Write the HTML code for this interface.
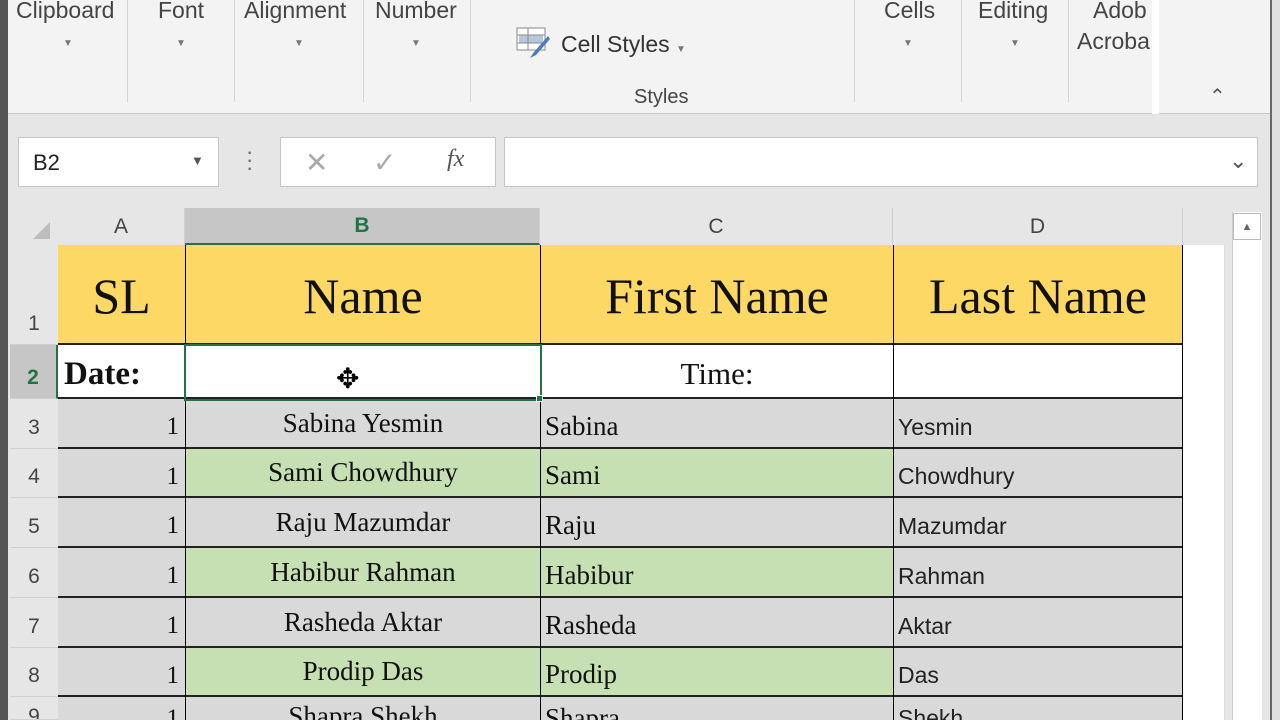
<!DOCTYPE html>
<html><head><meta charset="utf-8"><style>
*{margin:0;padding:0;box-sizing:border-box}
html{width:1280px;height:720px;overflow:hidden}
body{width:1280px;height:720px;overflow:hidden;background:#e6e6e6;position:relative;font-family:"Liberation Sans",sans-serif}
.a{position:absolute}
.rib{left:8px;top:0;width:1262px;height:114px;background:#f3f3f3;border-bottom:1px solid #c6c6c6}
.lbl{font-size:23px;color:#444;position:absolute;top:-3px}
.sep{position:absolute;top:0;width:1px;height:102px;background:#d4d4d4}
.dd{position:absolute;top:38px;font-size:10px;color:#777}
.box{background:#fff;border:1px solid #c6c6c6;position:absolute}
.cell{position:absolute;font-family:"Liberation Serif",serif;color:#111;display:flex;align-items:center;border-bottom:2px solid #222}
.hdr{position:absolute;top:208px;height:37px;font-size:21px;color:#444;display:flex;align-items:center;justify-content:center;border-right:1px solid #cfcfcf}
.rn{position:absolute;left:10px;width:48px;font-size:21px;color:#444;display:flex;align-items:flex-end;justify-content:center;padding-bottom:8px;background:#e6e6e6;border-bottom:1px solid #cfcfcf}
</style></head><body>
<div class="a" style="left:0;top:0;width:8px;height:720px;background:#555"></div>
<div class="a rib">
<div class="lbl" style="left:8px">Clipboard</div><div class="dd" style="left:55px">▼</div>
<div class="sep" style="left:119px"></div>
<div class="lbl" style="left:150px">Font</div><div class="dd" style="left:168px">▼</div>
<div class="sep" style="left:226px"></div>
<div class="lbl" style="left:236px">Alignment</div><div class="dd" style="left:286px">▼</div>
<div class="sep" style="left:355px"></div>
<div class="lbl" style="left:367px">Number</div><div class="dd" style="left:403px">▼</div>
<div class="sep" style="left:462px"></div>
<svg class="a" style="left:508px;top:26px" width="36" height="36" viewBox="0 0 36 36"><rect x="1" y="2" width="28" height="22" fill="#fff" stroke="#888"/><rect x="3" y="9" width="24" height="8" fill="#b8c8dc"/><line x1="1" y1="9" x2="29" y2="9" stroke="#888"/><line x1="1" y1="17" x2="29" y2="17" stroke="#888"/><line x1="12" y1="2" x2="12" y2="24" stroke="#888"/><path d="M32 10 L18 26 L14 32 L20 29 L34 13Z" fill="#4a7cc0"/></svg>
<div class="a" style="left:553px;top:31px;font-size:23px;color:#333">Cell Styles <span style="font-size:10px;color:#777">▼</span></div>
<div class="lbl" style="left:626px;top:86px;font-size:20px">Styles</div>
<div class="sep" style="left:846px"></div>
<div class="lbl" style="left:876px">Cells</div><div class="dd" style="left:895px">▼</div>
<div class="sep" style="left:953px"></div>
<div class="lbl" style="left:970px">Editing</div><div class="dd" style="left:1002px">▼</div>
<div class="sep" style="left:1060px"></div>
<div class="lbl" style="left:1085px">Adob</div><div class="lbl" style="left:1069px;top:28px">Acroba</div>
<div class="a" style="left:1144px;top:0;width:7px;height:114px;background:#fff"></div>
<div class="a" style="left:1201px;top:84px;font-size:20px;color:#555">&#8963;</div>
</div>
<div class="a" style="left:1270px;top:0;width:10px;height:720px;background:#e0e0e0;border-left:2px solid #666"></div>
<div class="box" style="left:18px;top:137px;width:201px;height:50px"><span class="a" style="left:14px;top:12px;font-size:22px;color:#222">B2</span><span class="a" style="left:172px;top:15px;font-size:13px;color:#555">▼</span></div>
<div class="a" style="left:246px;top:148px;font-size:22px;color:#666;line-height:8px">·<br>·<br>·</div>
<div class="box" style="left:280px;top:137px;width:216px;height:50px"><span class="a" style="left:24px;top:8px;font-size:28px;color:#aaa">✕</span><span class="a" style="left:92px;top:8px;font-size:28px;color:#aaa">✓</span><span class="a" style="left:166px;top:8px;font-size:24px;color:#555;font-family:'Liberation Serif',serif;font-style:italic">fx</span></div>
<div class="box" style="left:504px;top:137px;width:754px;height:50px"><span class="a" style="left:724px;top:10px;font-size:22px;color:#555">&#8964;</span></div>
<div class="a" style="left:10px;top:208px;width:48px;height:37px;background:#e6e6e6"><svg width="48" height="37"><path d="M40 31 L40 14 L23 31Z" fill="#bdbdbd"/></svg></div>
<div class="hdr" style="left:58px;width:127px">A</div>
<div class="hdr" style="left:185px;width:355px;background:#c6c6c6;color:#217346;font-weight:bold;border-bottom:2px solid #217346">B</div>
<div class="hdr" style="left:540px;width:353px">C</div>
<div class="hdr" style="left:893px;width:290px">D</div>
<div class="a" style="left:1183px;top:245px;width:42px;height:475px;background:#fff;border-right:1px solid #ddd"></div>
<div class="a" style="left:1232px;top:212px;width:30px;height:508px;background:#fff;border-left:1px solid #ccc"></div>
<div class="a" style="left:1233px;top:213px;width:28px;height:27px;border:1px solid #bbb;font-size:11px;color:#666;text-align:center;line-height:26px">▲</div>
<div class="rn" style="top:245px;height:100px">1</div>
<div class="rn" style="top:345px;height:54px;background:#c6c6c6;color:#217346;font-weight:bold;border-right:2px solid #217346">2</div>
<div class="rn" style="top:399px;height:50px">3</div>
<div class="rn" style="top:449px;height:49px">4</div>
<div class="rn" style="top:498px;height:50px">5</div>
<div class="rn" style="top:548px;height:50px">6</div>
<div class="rn" style="top:598px;height:50px">7</div>
<div class="rn" style="top:648px;height:49px">8</div>
<div class="rn" style="top:697px;height:23px;overflow:hidden;padding:0;align-items:flex-start;padding-top:8px">9</div>
<div class="a" style="left:58px;top:245px;width:1125px;height:475px;background:#000"></div>
<div id="g"></div>
<script>
var rows=[[245,100],[345,54],[399,50],[449,49],[498,50],[548,50],[598,50],[648,49],[697,23]];
var cols=[[58,127],[185,355],[540,353],[893,290]];
var data=[
["SL","Name","First Name","Last Name"],
["Date:","","Time:",""],
["1","Sabina Yesmin","Sabina","Yesmin"],
["1","Sami Chowdhury","Sami","Chowdhury"],
["1","Raju Mazumdar","Raju","Mazumdar"],
["1","Habibur Rahman","Habibur","Rahman"],
["1","Rasheda Aktar","Rasheda","Aktar"],
["1","Prodip Das","Prodip","Das"],
["1","Shapra Shekh","Shapra","Shekh"]];
var h="";
for(var r=0;r<9;r++)for(var c=0;c<4;c++){
var x=cols[c][0]+(c?1:0),w=cols[c][1]-(c?1:0)-(c==3?1:0),y=rows[r][0],hh=rows[r][1];
var bg="#d9d9d9";if(r==0)bg="#fdd865";else if(r==1)bg="#fff";else if(r%2==1&&(c==1||c==2))bg="#c6e0b4";
var st="left:"+x+"px;top:"+y+"px;width:"+w+"px;height:"+hh+"px;background:"+bg+";overflow:hidden;";
if(r==8)st+="align-items:flex-start;border-bottom:none;padding-top:4px;";
var t=data[r][c];
if(r==0)st+="justify-content:center;font-size:50px;padding-top:4px;";
else if(r==1)st+="font-size:33px;padding-top:6px;"+(c==0?"font-weight:bold;padding-left:6px;":"justify-content:center;font-size:31px;");
else if(c==0)st+="justify-content:flex-end;padding-right:6px;font-size:25px;padding-top:8px;";
else if(c==1)st+="justify-content:center;font-size:27px;";
else if(c==2)st+="padding-left:4px;font-size:27px;padding-top:6px;";
else st+="padding-left:4px;font-size:23px;font-family:'Liberation Sans',sans-serif;color:#222;padding-top:8px;";
h+='<div class="cell" style="'+st+'">'+t+'</div>';}
h+='<div class="a" style="left:184px;top:344px;width:358px;height:57px;border:2px solid #217346"></div><div class="a" style="left:536px;top:395px;width:7px;height:7px;background:#217346;border:1px solid #fff"></div>';
h+='<div class="a" style="left:336px;top:362px;font-size:28px;color:#000">✥</div>';
document.getElementById("g").innerHTML=h;
</script>
</body></html>
